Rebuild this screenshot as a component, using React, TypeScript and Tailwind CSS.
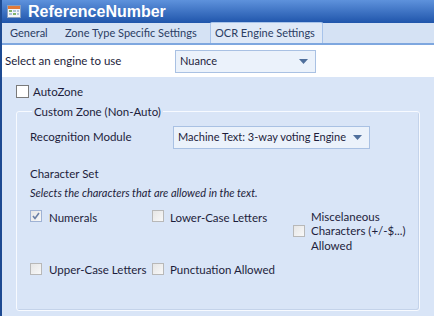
import React from 'react';

/** Small caret for the combo boxes. */
function Caret() {
  return (
    <svg width="9" height="5" viewBox="0 0 9 5" className="shrink-0">
      <path d="M0 0h9L4.5 5z" fill="#4f6f9c" />
    </svg>
  );
}

function Combo({ value, className }: { value: string; className: string }) {
  return (
    <div
      className={`flex items-center justify-between whitespace-nowrap border border-[#a9c1e3] bg-[#ebf2fb] pl-[4px] pr-[7px] text-[11px] text-[#1d1d3b] ${className}`}
    >
      <span>{value}</span>
      <Caret />
    </div>
  );
}

function Check({ checked = false }: { checked?: boolean }) {
  return (
    <div
      className={`flex h-[12px] w-[12px] shrink-0 items-center justify-center border bg-gradient-to-br from-[#e6e6e6] to-[#f8f8f8] ${
        checked ? 'border-[#9fb2d4]' : 'border-[#b8b8b8]'
      }`}
    >
      {checked && (
        <svg width="8" height="8" viewBox="0 0 8 8">
          <path d="M1 4l2 2.5L7 1" stroke="#6a7fa6" strokeWidth="1.6" fill="none" />
        </svg>
      )}
    </div>
  );
}

function TitleIcon() {
  return (
    <svg width="14" height="13" viewBox="0 0 14 13" className="shrink-0">
      <rect x="0.5" y="0.5" width="13" height="12" fill="#f4f6fa" stroke="#8aa0c0" />
      <rect x="1" y="1" width="12" height="3" fill="#e07a3a" />
      <rect x="2" y="5" width="3" height="2" fill="#7fb26a" />
      <rect x="6" y="5" width="3" height="2" fill="#b0c4dc" />
      <rect x="10" y="5" width="2" height="2" fill="#b0c4dc" />
      <rect x="2" y="8" width="3" height="2" fill="#b0c4dc" />
      <rect x="6" y="8" width="3" height="2" fill="#7fb26a" />
      <rect x="10" y="8" width="2" height="2" fill="#b0c4dc" />
    </svg>
  );
}

export default function App() {
  return (
    <div
      className="flex h-[316px] w-[434px] flex-col overflow-hidden whitespace-nowrap border-l-2 border-[#1d4a92] bg-[#d9e5f7] text-[11.5px] text-[#1d1d3b]"
      style={{ fontFamily: 'Lato, "Noto Sans", sans-serif' }}
    >
      {/* Title bar */}
      <div className="flex h-[23px] items-center gap-[7px] bg-gradient-to-b from-[#5e92dc] to-[#1f55ab] pl-[5px]">
        <TitleIcon />
        <span
          className="text-[16px] font-bold leading-none text-white"
          style={{ fontFamily: '"Liberation Sans", Arial, sans-serif' }}
        >
          ReferenceNumber
        </span>
      </div>

      {/* Tab strip */}
      <div className="flex h-[22px] items-end border-b-2 border-[#7ea7df] bg-[#d5e2f4] pl-[6px] text-[11px]">
        <div className="flex h-[20px] w-[55px] items-center px-[2px] text-[#2b3d63]">General</div>
        <div className="flex h-[20px] w-[147px] items-center px-[2px] text-[#2b3d63]">
          Zone Type Specific Settings
        </div>
        <div className="flex h-[21px] w-[113px] items-center rounded-t-[2px] border border-b-0 border-[#a7c3ea] bg-[#dfe9f7] px-[4px] text-[#2b3d63]">
          OCR Engine Settings
        </div>
      </div>

      {/* Engine row */}
      <div className="flex h-[32px] items-center bg-white pl-[3px]">
        <span className="w-[170px]">Select an engine to use</span>
        <Combo value="Nuance" className="h-[23px] w-[141px]" />
      </div>

      {/* Body */}
      <div className="flex flex-1 flex-col px-[14px] pt-[6px]">
        <label className="flex items-center gap-[4px]">
          <div className="h-[13px] w-[13px] border border-[#7a7a7a] bg-white" />
          <span>AutoZone</span>
        </label>

        <fieldset className="mt-[3px] h-[208px] rounded-[3px] border border-[#f7faff] pb-0 pl-[13px] pr-[10px] shadow-[inset_-1px_-1px_0_#c4d3ea]">
          <legend className="ml-[2px] px-[2px] text-[#1d1d3b]">Custom Zone (Non-Auto)</legend>

          <div className="mt-[5px] flex items-center">
            <span className="w-[143px]">Recognition Module</span>
            <Combo value="Machine Text: 3-way voting Engine" className="h-[23px] w-[197px]" />
          </div>

          <div className="mt-[16px]">Character Set</div>
          <div className="mt-[3px] text-[11px] italic">Selects the characters that are allowed in the text.</div>

          <div className="grid grid-cols-[122px_141px_1fr]">
            <div className="flex h-[53px] items-start gap-[7px] pt-[9px]">
              <Check checked />
              <span className="-mt-[1px]">Numerals</span>
            </div>
            <div className="flex h-[53px] items-start gap-[6px] pt-[9px]">
              <Check />
              <span className="-mt-[1px]">Lower-Case Letters</span>
            </div>
            <div className="flex items-center gap-[6px] pt-[7px]">
              <Check />
              <span className="leading-[14.5px]">
                Miscelaneous
                <br />
                Characters (+/-$...)
                <br />
                Allowed
              </span>
            </div>
            <div className="flex h-[30px] items-center gap-[7px]">
              <Check />
              <span>Upper-Case Letters</span>
            </div>
            <div className="flex h-[30px] items-center gap-[6px]">
              <Check />
              <span>Punctuation Allowed</span>
            </div>
          </div>
        </fieldset>
      </div>
    </div>
  );
}
